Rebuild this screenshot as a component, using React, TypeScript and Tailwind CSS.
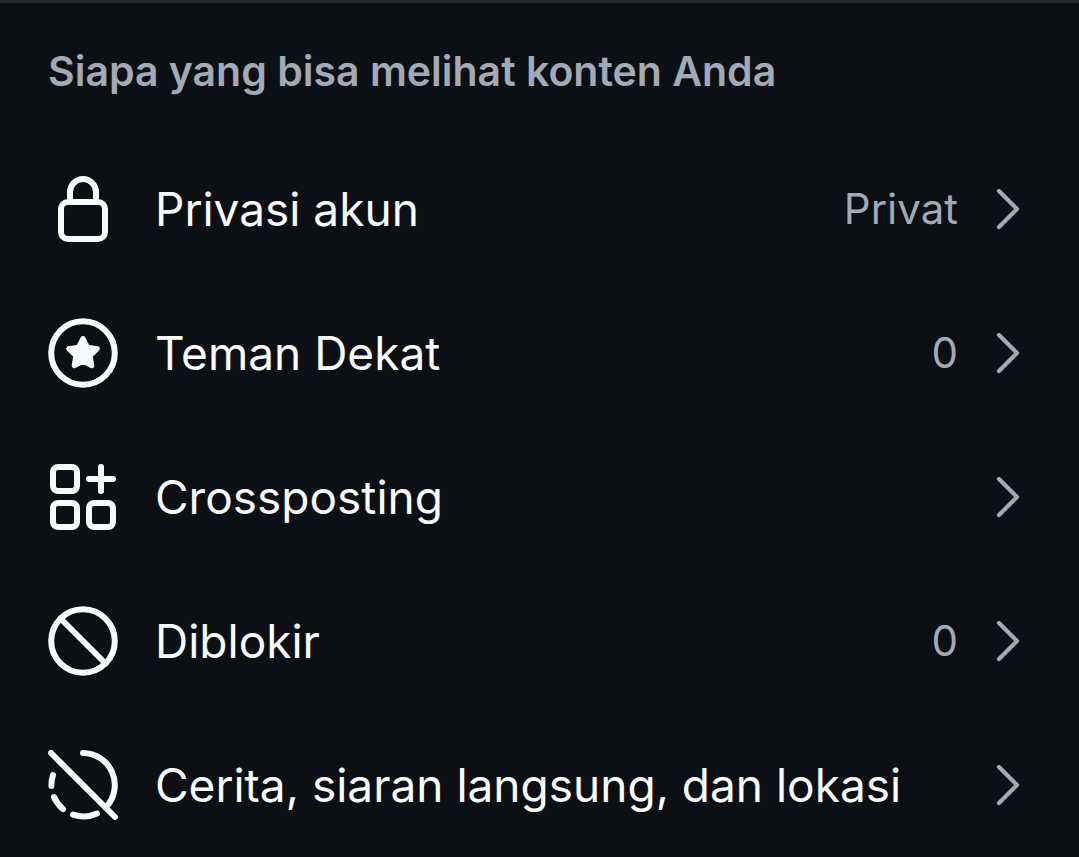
import React from 'react';
import { ChevronRight } from 'lucide-react';

interface SettingItem {
  id: string;
  label: string;
  value?: string;
  icon: React.ReactNode;
}

const Icon: React.FC<{ children: React.ReactNode }> = ({ children }) => (
  <svg
    viewBox="0 0 72 72"
    className="size-18 shrink-0"
    fill="none"
    stroke="currentColor"
    strokeWidth="6"
    strokeLinecap="round"
    strokeLinejoin="round"
    aria-hidden="true"
  >
    {children}
  </svg>
);

const items: SettingItem[] = [
  {
    id: 'privasi',
    label: 'Privasi akun',
    value: 'Privat',
    icon: (
      <Icon>
        <rect x="14" y="29" width="44" height="37" rx="7" />
        <path d="M23 29V19a13 13 0 0 1 26 0v10" />
      </Icon>
    ),
  },
  {
    id: 'teman-dekat',
    label: 'Teman Dekat',
    value: '0',
    icon: (
      <Icon>
        <circle cx="36" cy="36" r="31.8" />
        <path
          d="M36 21.5l4.4 8.7 9.9 1.5-7.1 7.1 1.6 9.9L36 44.2l-8.8 4.5 1.6-9.9-7.1-7.1 9.9-1.5z"
          fill="currentColor"
          strokeWidth="5"
        />
      </Icon>
    ),
  },
  {
    id: 'crossposting',
    label: 'Crossposting',
    icon: (
      <Icon>
        <rect x="6" y="6" width="24" height="24" rx="5" />
        <rect x="6" y="42" width="24" height="24" rx="5" />
        <rect x="42" y="42" width="24" height="24" rx="5" />
        <path d="M54 6v24M42 18h24" />
      </Icon>
    ),
  },
  {
    id: 'diblokir',
    label: 'Diblokir',
    value: '0',
    icon: (
      <Icon>
        <circle cx="36" cy="36" r="31.8" />
        <path d="M13.5 13.5l45 45" />
      </Icon>
    ),
  },
  {
    id: 'cerita',
    label: 'Cerita, siaran langsung, dan lokasi',
    icon: (
      <Icon>
        <path d="M4 4l64 64" />
        <path d="M36 4a32 32 0 0 1 23.5 53.5" />
        <path d="M6 26a32 32 0 0 0-1.6 11" />
        <path d="M7 48a32 32 0 0 0 9 12" />
        <path d="M26 65.6a32 32 0 0 0 24-1.1" />
      </Icon>
    ),
  },
];

const SettingRow: React.FC<{ item: SettingItem }> = ({ item }) => (
  <button type="button" className="flex h-36 w-full items-center px-[47px] text-left text-[#f9fafb]">
    {item.icon}
    <span className="ml-9 flex-1 text-[46px] leading-[56px]">{item.label}</span>
    {item.value && <span className="text-[42px] leading-[56px] text-[#a3a9b5]">{item.value}</span>}
    <ChevronRight className="-mr-3 ml-3.5 size-18 shrink-0 text-[#a3a9b5]" strokeWidth={1.4} aria-hidden="true" />
  </button>
);

const App: React.FC = () => {
  return (
    <main className="min-h-screen border-t-3 border-[#25282d] bg-[#0c1014] font-['Inter',sans-serif]">
      <h2 className="px-12 pb-[38px] pt-10 text-[41px] font-semibold leading-[56px] text-[#a3a9b5]">
        Siapa yang bisa melihat konten Anda
      </h2>
      <ul>
        {items.map((item) => (
          <li key={item.id}>
            <SettingRow item={item} />
          </li>
        ))}
      </ul>
    </main>
  );
};

export default App;
